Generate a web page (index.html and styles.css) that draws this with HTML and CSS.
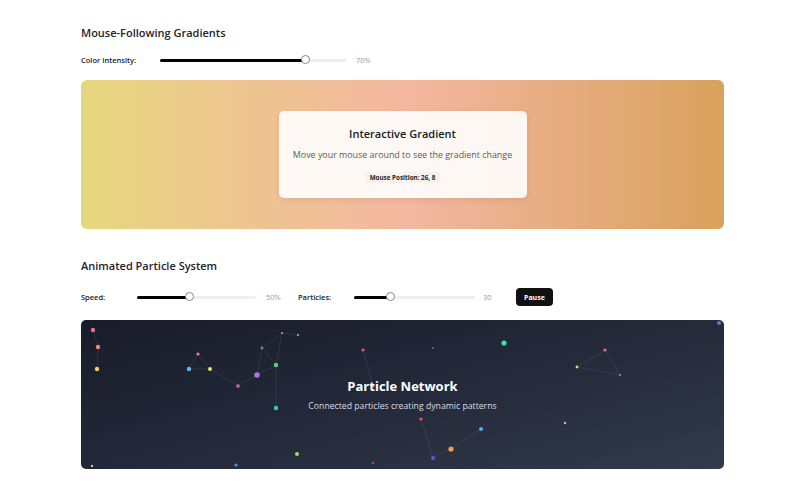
FILE: index.html
```html
<!DOCTYPE html>
<html lang="en">
<head>
    <meta charset="UTF-8">
    <title>Gradients and Particles</title>
    <link rel="stylesheet" href="styles.css">
</head>
<body>
    <div class="page">
        <!-- Mouse following gradient -->
        <section class="demo">
            <h2 class="demo-title">Mouse-Following Gradients</h2>
            <div class="controls">
                <span class="control-label label-intensity">Color Intensity:</span>
                <div class="slider slider-intensity">
                    <div class="slider-fill" style="width: 78%"></div>
                    <div class="slider-thumb" style="left: 78%"></div>
                </div>
                <span class="control-value">70%</span>
            </div>
            <div class="gradient-box">
                <div class="gradient-card">
                    <h3 class="card-title">Interactive Gradient</h3>
                    <p class="card-text">Move your mouse around to see the gradient change</p>
                    <span class="card-pos">Mouse Position: 26, 8</span>
                </div>
            </div>
        </section>

        <!-- Particle system -->
        <section class="demo demo-particles">
            <h2 class="demo-title">Animated Particle System</h2>
            <div class="controls controls-tall">
                <span class="control-label label-speed">Speed:</span>
                <div class="slider slider-speed">
                    <div class="slider-fill" style="width: 44.5%"></div>
                    <div class="slider-thumb" style="left: 44.5%"></div>
                </div>
                <span class="control-value value-speed">50%</span>
                <span class="control-label label-particles">Particles:</span>
                <div class="slider slider-particles">
                    <div class="slider-fill" style="width: 30.5%"></div>
                    <div class="slider-thumb" style="left: 30.5%"></div>
                </div>
                <span class="control-value value-particles">30</span>
                <button class="pause-btn">Pause</button>
            </div>
            <div class="particle-box">
                <svg class="particle-canvas" viewBox="0 0 643 149" width="643" height="149">
                    <g stroke="rgba(160,170,200,0.22)" stroke-width="0.6" fill="none">
                        <line x1="12" y1="10" x2="17" y2="27"/>
                        <line x1="17" y1="27" x2="16" y2="49"/>
                        <line x1="117" y1="34" x2="108" y2="49"/>
                        <line x1="108" y1="49" x2="129" y2="49"/>
                        <line x1="129" y1="49" x2="117" y2="34"/>
                        <line x1="129" y1="49" x2="157" y2="66"/>
                        <line x1="157" y1="66" x2="176" y2="55"/>
                        <line x1="176" y1="55" x2="195" y2="45"/>
                        <line x1="176" y1="55" x2="181" y2="28"/>
                        <line x1="181" y1="28" x2="195" y2="45"/>
                        <line x1="181" y1="28" x2="201" y2="13"/>
                        <line x1="201" y1="13" x2="217" y2="15"/>
                        <line x1="201" y1="13" x2="195" y2="45"/>
                        <line x1="195" y1="45" x2="195" y2="88"/>
                        <line x1="282" y1="30" x2="292" y2="66"/>
                        <line x1="524" y1="30" x2="496" y2="47"/>
                        <line x1="524" y1="30" x2="539" y2="55"/>
                        <line x1="496" y1="47" x2="539" y2="55"/>
                        <line x1="370" y1="129" x2="352" y2="138"/>
                        <line x1="340" y1="99" x2="352" y2="138"/>
                        <line x1="400" y1="109" x2="370" y2="129"/>
                    </g>
                    <g>
                        <circle cx="12" cy="10" r="2.2" fill="#f0707a"/>
                        <circle cx="17" cy="27" r="2.2" fill="#f08a6a"/>
                        <circle cx="16" cy="49" r="2.2" fill="#f4d25a"/>
                        <circle cx="117" cy="34" r="1.6" fill="#e87ab8"/>
                        <circle cx="108" cy="49" r="2.2" fill="#5ab8f0"/>
                        <circle cx="129" cy="49" r="2" fill="#e8e070"/>
                        <circle cx="157" cy="66" r="1.8" fill="#e060a8"/>
                        <circle cx="176" cy="55" r="2.8" fill="#b070f0"/>
                        <circle cx="181" cy="28" r="1.4" fill="#9070e0"/>
                        <circle cx="195" cy="45" r="2.2" fill="#50d880"/>
                        <circle cx="201" cy="13" r="1" fill="#a0a8c0"/>
                        <circle cx="217" cy="15" r="1.2" fill="#40c0a0"/>
                        <circle cx="195" cy="88" r="2.2" fill="#30d0b0"/>
                        <circle cx="216" cy="134" r="2" fill="#a0e060"/>
                        <circle cx="155" cy="145" r="1.6" fill="#5090e0"/>
                        <circle cx="11" cy="146" r="1.2" fill="#c0c8a0"/>
                        <circle cx="282" cy="30" r="1.6" fill="#e05080"/>
                        <circle cx="292" cy="66" r="1.6" fill="#f06070"/>
                        <circle cx="292" cy="143" r="1" fill="#e05050"/>
                        <circle cx="352" cy="28" r="1" fill="#a05070"/>
                        <circle cx="423" cy="23" r="2.6" fill="#40e0a0"/>
                        <circle cx="524" cy="30" r="1.6" fill="#e07090"/>
                        <circle cx="496" cy="47" r="1.4" fill="#d0e080"/>
                        <circle cx="539" cy="55" r="1" fill="#b09080"/>
                        <circle cx="340" cy="99" r="1.6" fill="#f05060"/>
                        <circle cx="400" cy="109" r="2" fill="#50b0f0"/>
                        <circle cx="370" cy="129" r="2.6" fill="#f0a050"/>
                        <circle cx="352" cy="138" r="2" fill="#7050e0"/>
                        <circle cx="484" cy="103" r="1.2" fill="#c0c0b0"/>
                        <circle cx="638" cy="3" r="2" fill="#7070e0"/>
                    </g>
                </svg>
                <div class="particle-text">
                    <h3 class="particle-title">Particle Network</h3>
                    <p class="particle-sub">Connected particles creating dynamic patterns</p>
                </div>
            </div>
        </section>
    </div>
</body>
</html>
```

FILE: styles.css
```css
body, html {
    margin: 0;
    padding: 0;
}

body {
    font-family: "Open Sans", "Noto Sans", sans-serif;
    background-color: #fff;
    color: #1f2328;
}

.page {
    width: 643px;
    padding: 24px 0 0 81px;
}

.demo-title {
    margin: 0 0 9px 0;
    font-size: 11px;
    line-height: 18px;
    font-weight: 600;
    color: #1f2328;
}

.demo-particles {
    margin-top: 28px;
}

.demo-particles .demo-title {
    margin-bottom: 13px;
}

.controls {
    display: flex;
    align-items: center;
    height: 18px;
    margin-bottom: 11px;
}

.controls-tall {
    margin-bottom: 14px;
}

.control-label {
    font-size: 7.5px;
    font-weight: 600;
    color: #222;
}

.label-intensity {
    width: 79px;
}

.label-speed {
    width: 56px;
}

.label-particles {
    width: 56px;
}

.control-value {
    font-size: 7.5px;
    color: #999;
    margin-left: 9px;
}

.value-speed {
    width: 32px;
    margin-left: 10px;
}

.value-particles {
    width: 33px;
    margin-left: 8px;
}

.slider {
    position: relative;
    height: 3px;
    background-color: #efefef;
    border-radius: 2px;
}

.slider-intensity {
    width: 187px;
}

.slider-speed {
    width: 119px;
}

.slider-particles {
    width: 121px;
}

.slider-fill {
    height: 3px;
    background-color: #000;
    border-radius: 2px;
}

.slider-thumb {
    position: absolute;
    top: -4px;
    width: 9px;
    height: 9px;
    margin-left: -5px;
    border-radius: 50%;
    background-color: #fff;
    border: 1px solid #888;
    box-sizing: border-box;
}

.pause-btn {
    height: 18px;
    padding: 0 8px;
    background-color: #111;
    color: #fff;
    border: none;
    border-radius: 4px;
    font-family: "Open Sans", sans-serif;
    font-size: 7px;
    font-weight: 700;
    cursor: pointer;
}

.gradient-box {
    height: 149px;
    border-radius: 6px;
    background: linear-gradient(90deg, #e6d77e 0%, #edc58f 25%, #f3b8a1 50%, #e6ac80 75%, #d8a25b 100%);
    display: flex;
    align-items: center;
    justify-content: center;
}

.gradient-card {
    width: 248px;
    height: 87px;
    box-sizing: border-box;
    padding-top: 15px;
    background-color: rgba(255, 255, 255, 0.9);
    border-radius: 5px;
    box-shadow: 0 2px 6px rgba(0, 0, 0, 0.08);
    text-align: center;
}

.card-title {
    margin: 0;
    font-size: 11px;
    line-height: 16px;
    font-weight: 600;
    color: #1a1a1a;
}

.card-text {
    margin: 7px 0 0 0;
    font-size: 8.9px;
    line-height: 12px;
    color: #5a5a5a;
}

.card-pos {
    display: inline-block;
    margin-top: 11px;
    padding: 1px 5px;
    font-size: 6.3px;
    font-weight: 700;
    color: #222;
    background-color: rgba(240, 235, 230, 0.5);
    border-radius: 3px;
}

.particle-box {
    position: relative;
    height: 149px;
    border-radius: 5px;
    overflow: hidden;
    background: linear-gradient(165deg, #181c2a 0%, #252b3b 55%, #323a4b 100%);
}

.particle-canvas {
    position: absolute;
    top: 0;
    left: 0;
}

.particle-text {
    position: relative;
    height: 100%;
    display: flex;
    flex-direction: column;
    align-items: center;
    justify-content: center;
}

.particle-title {
    margin: 0;
    font-size: 13px;
    line-height: 18px;
    font-weight: 700;
    color: #fff;
}

.particle-sub {
    margin: 5px 0 0 0;
    font-size: 8.7px;
    line-height: 12px;
    color: #d8dce4;
}
```
